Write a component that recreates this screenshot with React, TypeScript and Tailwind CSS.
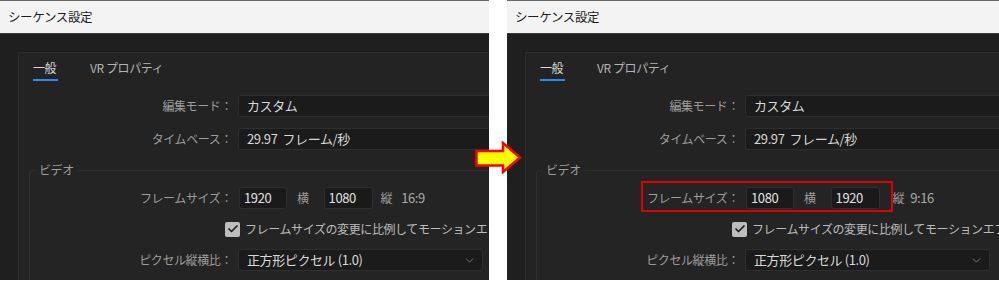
import { ChevronDown, Check } from 'lucide-react';

type WinProps = {
  width: string;
  w: string;
  h: string;
  ratio: string;
  highlight?: boolean;
};

const font = { fontFamily: '"Noto Sans CJK JP", "Noto Sans", sans-serif' };

function Row({ label, children }: { label: string; children: React.ReactNode }) {
  return (
    <div className="flex items-center">
      <span className="w-[213px] shrink-0 text-right text-[#9c9c9c]">{label}</span>
      <div className="ml-[6px] flex items-center">{children}</div>
    </div>
  );
}

function SequenceWindow({ width, w, h, ratio, highlight }: WinProps) {
  return (
    <div
      className={`${width} h-[280px] shrink-0 overflow-hidden whitespace-nowrap border-t border-[#6a6a6a] bg-[#1f1f1f] text-[12px] leading-[16px] tracking-[-0.4px]`}
      style={font}
    >
      {/* title bar */}
      <div className="flex h-[33px] items-center border-b border-[#3a3a3a] bg-[#f3f3f3] pl-[8px] text-[12.5px] text-[#1c1c1c]">
        シーケンス設定
      </div>

      {/* inner panel */}
      <div className="ml-[18px] mt-[18px] h-[300px] border-l border-t border-[#2d2d2d] bg-[#232323]">
        {/* tabs */}
        <div className="flex items-start pl-[14px] pt-[7px]">
          <div className="flex flex-col">
            <span className="text-[#d6d6d6]">一般</span>
            <span className="mt-[3px] h-[2px] w-[25px] bg-[#2d8ceb]" />
          </div>
          <span className="ml-[32px] text-[#b4b4b4]">VR プロパティ</span>
        </div>

        <div className="mt-[14px] flex flex-col gap-[11px]">
          <Row label="編集モード：">
            <div className="flex h-[22px] w-[400px] items-center rounded-[3px] border border-[#2e2e2e] bg-[#1b1b1b] pl-[8px] text-[13px] text-[#d8d8d8]">
              カスタム
            </div>
          </Row>
          <Row label="タイムベース：">
            <div className="flex h-[22px] w-[400px] items-center rounded-[3px] border border-[#2e2e2e] bg-[#1b1b1b] pl-[8px] text-[13px] text-[#d8d8d8]">
              29.97&nbsp;&nbsp;フレーム/秒
            </div>
          </Row>
        </div>

        {/* video fieldset */}
        <fieldset className="ml-[10px] mt-[12px] h-[200px] rounded-tl-[4px] border-l border-t border-[#2f2f2f] bg-[#242424]">
          <legend className="ml-[5px] px-[4px] text-[#9c9c9c]">ビデオ</legend>
          <div className="flex flex-col pt-[9px]">
            <div className="relative flex items-center">
              <span className="w-[202px] shrink-0 text-right text-[#9c9c9c]">フレームサイズ：</span>
              <div className="ml-[7px] flex h-[22px] w-[48px] items-center rounded-[3px] border border-[#2e2e2e] bg-[#1a1a1a] pl-[4px] text-[13px] text-[#e0e0e0]">
                {w}
              </div>
              <span className="ml-[10px] text-[#9c9c9c]">横</span>
              <div className="ml-[15px] flex h-[22px] w-[49px] items-center rounded-[3px] border border-[#2e2e2e] bg-[#1a1a1a] pl-[4px] text-[13px] text-[#e0e0e0]">
                {h}
              </div>
              <span className={`${highlight ? 'ml-[13px]' : 'ml-[8px]'} text-[#9c9c9c]`}>縦</span>
              <span className={`${highlight ? 'ml-[6px]' : 'ml-[9px]'} text-[13px] text-[#a8a8a8]`}>{ratio}</span>
              {highlight && (
                <div className="pointer-events-none absolute left-[104px] top-[-6px] h-[31px] w-[252px] border-2 border-[#e00000]" />
              )}
            </div>

            <div className="ml-[195px] mt-[12px] flex items-center">
              <span className="flex h-[15px] w-[15px] items-center justify-center rounded-[2px] bg-[#bdbdbd]">
                <Check size={12} strokeWidth={3.5} className="text-[#1e1e1e]" />
              </span>
              <span className="ml-[5px] text-[12px] text-[#bcbcbc]">フレームサイズの変更に比例してモーションエフェクトを拡大・縮小</span>
            </div>

            <div className="mt-[12px] flex items-center">
              <span className="w-[202px] shrink-0 text-right text-[#9c9c9c]">ピクセル縦横比：</span>
              <div className="ml-[6px] flex h-[22px] w-[245px] items-center justify-between rounded-[3px] border border-[#2e2e2e] bg-[#1b1b1b] pl-[8px] pr-[6px] text-[13px] text-[#d8d8d8]">
                <span>正方形ピクセル (1.0)</span>
                <ChevronDown size={13} strokeWidth={1.5} className="text-[#8a8a8a]" />
              </div>
            </div>
          </div>
        </fieldset>
      </div>
    </div>
  );
}

export default function App() {
  return (
    <div className="relative h-[281px] w-[999px] overflow-hidden bg-white">
      <div className="flex">
        <SequenceWindow width="w-[489px]" w="1920" h="1080" ratio="16:9" />
        <div className="w-[18px] shrink-0" />
        <SequenceWindow width="w-[492px]" w="1080" h="1920" ratio="9:16" highlight />
      </div>

      {/* arrow overlay */}
      <svg
        className="absolute left-[475px] top-[141px]"
        width="47"
        height="33"
        viewBox="0 0 47 33"
      >
        <polygon
          points="1.5,10 28,10 28,2 45,16.5 28,31 28,24.5 1.5,24.5"
          fill="#ffff00"
          stroke="#ff0000"
          strokeWidth="2.5"
          strokeLinejoin="miter"
        />
      </svg>
    </div>
  );
}
